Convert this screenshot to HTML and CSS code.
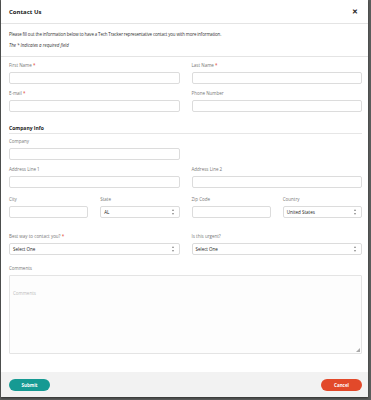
FILE: index.html
```html
<!DOCTYPE html>
<html>
<head>
<meta charset="utf-8">
<link rel="stylesheet" href="styles.css">
</head>
<body>
<div class="backdrop">
  <div class="modal">
    <div class="modal-header">
      <h1 class="title">Contact Us</h1>
      <span class="close">&#x2715;</span>
    </div>
    <div class="intro">
      <p class="lead">Please fill out the information below to have a Tech Tracker representative contact you with more information.</p>
      <p class="note">The * Indicates a required field</p>
    </div>
    <div class="form">
      <div class="grid2">
        <div class="field"><label>First Name <span class="req">*</span></label><div class="input"></div></div>
        <div class="field"><label>Last Name <span class="req">*</span></label><div class="input"></div></div>
        <div class="field"><label>E-mail <span class="req">*</span></label><div class="input"></div></div>
        <div class="field"><label>Phone Number</label><div class="input"></div></div>
      </div>
      <h2 class="section">Company Info</h2>
      <div class="grid2">
        <div class="field"><label>Company</label><div class="input"></div></div>
        <div></div>
        <div class="field"><label>Address Line 1</label><div class="input"></div></div>
        <div class="field"><label>Address Line 2</label><div class="input"></div></div>
      </div>
      <div class="grid4">
        <div class="field"><label>City</label><div class="input"></div></div>
        <div class="field"><label>State</label><div class="input select"><span>AL</span><i class="arrows"></i></div></div>
        <div class="field"><label>Zip Code</label><div class="input"></div></div>
        <div class="field"><label>Country</label><div class="input select"><span>United States</span><i class="arrows"></i></div></div>
      </div>
      <div class="grid2 contact">
        <div class="field"><label>Best way to contact you? <span class="req">*</span></label><div class="input select"><span>Select One</span><i class="arrows"></i></div></div>
        <div class="field"><label>Is this urgent?</label><div class="input select"><span>Select One</span><i class="arrows"></i></div></div>
      </div>
      <div class="field comments"><label>Comments</label><div class="textarea"><span class="ph">Comments</span><i class="grip"></i></div></div>
    </div>
    <div class="footer">
      <button class="btn submit">Submit</button>
      <button class="btn cancel">Cancel</button>
    </div>
  </div>
</div>
</body>
</html>
```
FILE: styles.css
```css
* { box-sizing: border-box; }
html, body { margin: 0; padding: 0; }
body {
  width: 371px;
  height: 400px;
  overflow: hidden;
  background: #5b5d5c;
  font-family: "Open Sans", "Liberation Sans", sans-serif;
}
.backdrop {
  padding: 0 3px 0 1px;
}
.modal {
  background: #fff;
  height: 397px;
  display: flex;
  flex-direction: column;
  box-shadow: 0 1px 2px rgba(0,0,0,0.5);
}
.modal-header {
  height: 24px;
  border-bottom: 1px solid #e4e4e4;
  display: flex;
  align-items: center;
  justify-content: space-between;
  padding: 0 10px 0 8px;
}
.title {
  margin: 0;
  font-size: 6px;
  font-weight: 700;
  color: #222;
}
.close {
  font-size: 7px;
  font-weight: 700;
  color: #222;
}
.intro {
  padding: 6px 8px 7px;
  border-bottom: 1px solid #e4e4e4;
}
.lead {
  margin: 0;
  font-size: 4.4px;
  letter-spacing: -0.12px;
  color: #333;
  line-height: 8px;
}
.note {
  margin: 3px 0 0;
  font-size: 4.4px;
  font-style: italic;
  color: #333;
  line-height: 8px;
}
.form {
  padding: 5px 6px 0 8px;
  flex: 1;
}
.grid2 {
  display: grid;
  grid-template-columns: 1fr 1fr;
  column-gap: 12px;
  row-gap: 6px;
}
.grid4 {
  display: grid;
  grid-template-columns: repeat(4, 1fr);
  column-gap: 12px;
  margin-top: 8px;
}
.contact { margin-top: 15px; }
.field label {
  display: block;
  font-size: 4.5px;
  line-height: 7px;
  color: #777;
  margin-bottom: 3px;
}
.req { color: #e2402a; }
.input {
  height: 12px;
  border: 1px solid #dcdcdc;
  border-radius: 2px;
  background: #fff;
}
.select {
  display: flex;
  align-items: center;
  justify-content: space-between;
  padding: 0 4px 0 3px;
  font-size: 4.5px;
  color: #222;
}
.arrows {
  width: 3px;
  height: 6px;
  position: relative;
}
.arrows::before, .arrows::after {
  content: "";
  position: absolute;
  left: 0;
  border-left: 1.5px solid transparent;
  border-right: 1.5px solid transparent;
}
.arrows::before { top: 0; border-bottom: 2px solid #888; }
.arrows::after { bottom: 0; border-top: 2px solid #888; }
.section {
  margin: 13px 0 4px;
  font-size: 5px;
  font-weight: 700;
  color: #222;
  padding-bottom: 2px;
  border-bottom: 1px solid #e6e6e6;
  line-height: 6px;
}
.comments { margin-top: 10px; }
.textarea {
  height: 79px;
  border: 1px solid #e4e4e4;
  border-radius: 1px;
  background: #fdfdfd;
  position: relative;
  padding: 2px 3px;
}
.ph { font-size: 4.5px; color: #bbb; }
.grip {
  position: absolute;
  right: 1px;
  bottom: 1px;
  width: 0;
  height: 0;
  border-left: 4px solid transparent;
  border-bottom: 4px solid #aaa;
}
.footer {
  height: 25px;
  background: #f2f2f2;
  display: flex;
  align-items: center;
  justify-content: space-between;
  padding: 0 6px 0 8px;
}
.btn {
  border: none;
  border-radius: 6px;
  width: 41px;
  height: 12px;
  font-family: "Open Sans", "Liberation Sans", sans-serif;
  font-size: 4.5px;
  font-weight: 700;
  color: #fff;
  padding: 0;
}
.submit { background: #169a93; }
.cancel { background: #e2492a; }
```
